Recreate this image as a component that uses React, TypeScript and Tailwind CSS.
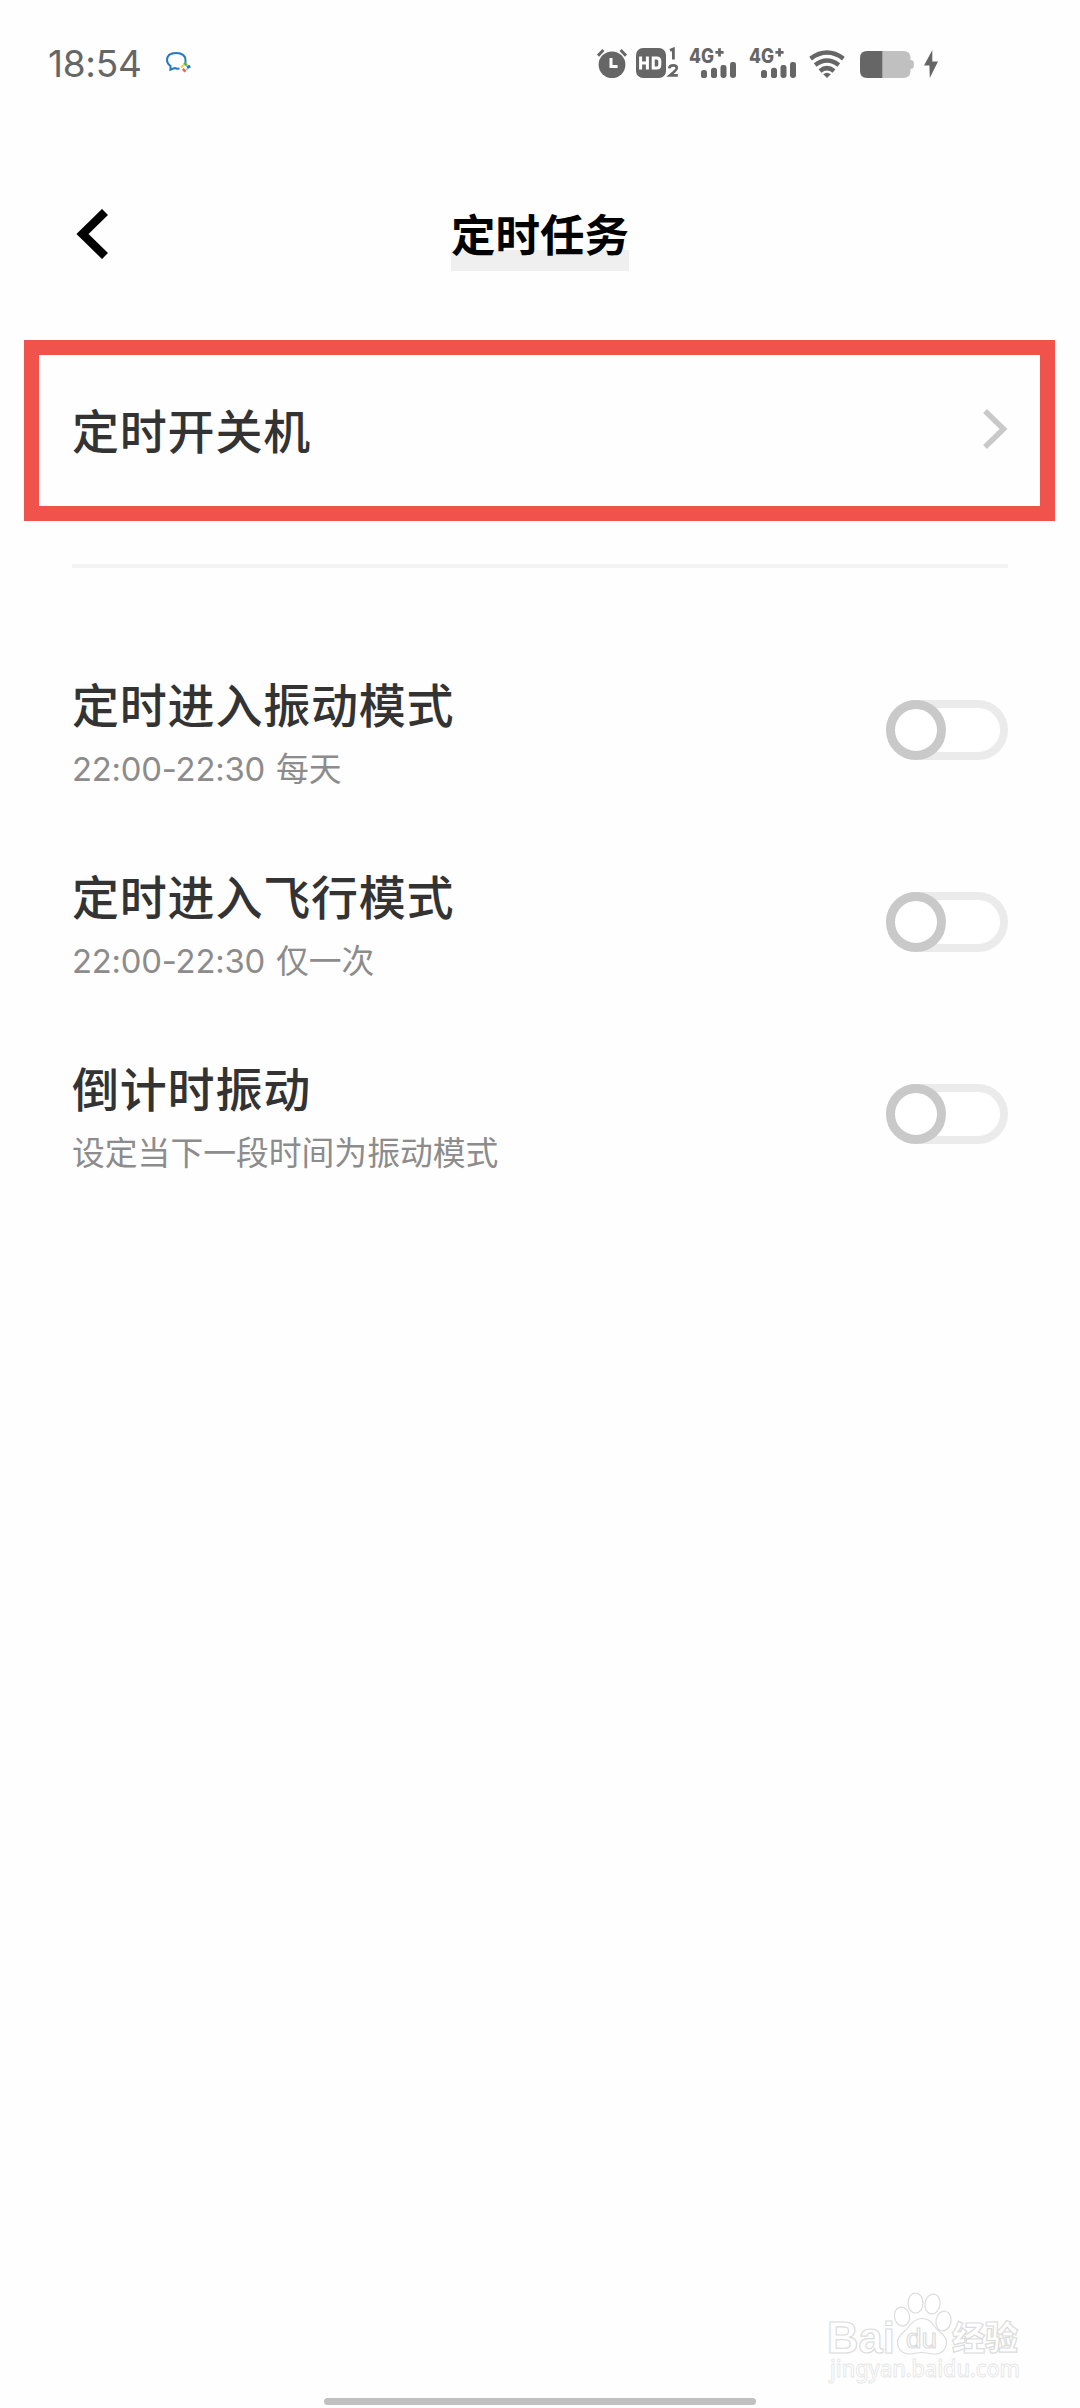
import React from "react";

const INK = "#666666";

function AlarmIcon() {
  return (
    <svg className="h-[30px] w-[30px]" viewBox="0 0 30 30">
      <circle cx="15" cy="16.8" r="13.4" fill={INK} />
      <path d="M1 7.6 6.4 2M29 7.6 23.6 2" stroke={INK} strokeWidth="3" fill="none" />
      <path d="M14 10v8.4h6.6" stroke="#fff" strokeWidth="3" fill="none" />
    </svg>
  );
}

function HdIcon() {
  return (
    <svg className="ml-2 h-[32px] w-[44px]" viewBox="0 0 44 32">
      <rect x="1" y="1" width="30" height="30" rx="7" fill={INK} />
      <path d="M5.6 9.6v13M12.4 9.6v13M5.6 16h7" stroke="#fff" strokeWidth="3" fill="none" />
      <path d="M18.2 11.1h3.6q3 0 3 3v4q0 3-3 3h-3.6z" stroke="#fff" strokeWidth="3" fill="none" />
      <path d="M35 3.4 38.4 2v10.5" stroke={INK} strokeWidth="2.8" fill="none" />
      <path d="M34.2 21.4q.4-3 4-3 3.6 0 3.6 2.6 0 1.6-2.4 3.4l-4.6 4h8" stroke={INK} strokeWidth="2.6" fill="none" />
    </svg>
  );
}

function SignalIcon() {
  return (
    <svg className="h-[32px] w-[48px] overflow-visible" viewBox="0 0 48 32">
      <text x="0" y="15.6" fontFamily="Inter" fontWeight="800" fontSize="19.5" textLength="25" lengthAdjust="spacingAndGlyphs" fill={INK}>4G</text>
      <path d="M26.4 5.4h8.2M30.5 1.3v8.2" stroke={INK} strokeWidth="2.8" />
      <rect x="12" y="23" width="6" height="8" rx="2.6" fill={INK} />
      <rect x="22" y="20.8" width="6" height="10.2" rx="2.6" fill={INK} />
      <rect x="31.5" y="18" width="6" height="13" rx="2.4" fill={INK} />
      <rect x="41" y="15" width="6" height="16" rx="2.4" fill={INK} />
    </svg>
  );
}

function WifiIcon() {
  return (
    <svg className="h-[30px] w-[38px]" viewBox="0 0 38 30">
      <g fill="none" stroke={INK} strokeWidth="4.4">
        <path d="M2.6 9.600q16.400-12 32.800 0" />
        <path d="M7.200 16q11.800-9 23.600 0" />
        <path d="M12 22q7-5.800 14 0" />
      </g>
      <path d="M15.200 25.200q3.800-3 7.600 0L19 29z" fill={INK} />
    </svg>
  );
}

function BatteryIcon() {
  return (
    <svg className="h-[27px] w-[54px]" viewBox="0 0 54 27">
      <path d="M22 0h21.5q7 0 7 7v2q3.300.200 3.300 2.400v4.200q0 2.200-3.300 2.400v2q0 7-7 7H22z" fill="#c0c0c0" />
      <path d="M22.300 0H7Q0 0 0 7v13q0 7 7 7h15.300z" fill={INK} />
    </svg>
  );
}

function ChatIcon() {
  return (
    <svg className="h-[24px] w-[28px]" viewBox="0 0 28 24">
      <path
        d="M14.500 17.600Q11.500 18 9.500 17L5.400 18.700 5.500 15Q2 12.200 2 9.200 2 2 11.200 2 20.500 2 20.500 9.500V12"
        fill="none"
        stroke="#2479c2"
        strokeWidth="2"
      />
      <path d="m16 16.500 4-3.700" stroke="#e5d64b" strokeWidth="2" />
      <path d="m19.300 11.500 2.400 3" stroke="#62ad3a" strokeWidth="2.400" />
      <path d="m22 16.500 3.200-1.300" stroke="#2479c2" strokeWidth="3" />
      <path d="m17.800 17.800 2.700 2.800" stroke="#e86a4b" strokeWidth="2.600" />
      <path d="m21.500 19 1-1" stroke="#8ccbe8" strokeWidth="2" />
    </svg>
  );
}

function StatusBar() {
  return (
    <header className="flex h-[128px] items-start pt-[47px]">
      <div className="flex h-[32px] w-full items-center">
        <span className="ml-[48px] w-[117px] pt-px font-['Inter'] text-[37px] leading-[32px] tracking-[-0.3px] text-[#666666]">18:54</span>
        <ChatIcon />
        <div className="ml-[404px] flex h-[32px] items-center">
          <AlarmIcon />
          <HdIcon />
          <div className="ml-[10px] flex gap-3">
            <SignalIcon />
            <SignalIcon />
          </div>
          <div className="ml-[11px] mt-[2px] flex">
            <WifiIcon />
          </div>
          <div className="ml-[14px] mt-[3px] flex">
            <BatteryIcon />
          </div>
          <svg className="ml-[10px] mt-[2px] h-[28px] w-[14px]" viewBox="0 0 14 28">
            <path d="M8.300 0 0 15.600h5.400L5.800 28 14 11.600H8.300z" fill={INK} />
          </svg>
        </div>
      </div>
    </header>
  );
}

function Toggle() {
  return (
    <button className="flex h-[60px] w-[122px] shrink-0 rounded-full border-8 border-[#ebebeb] bg-white" role="switch" aria-checked="false">
      <span className="-mt-2 -ml-2 block h-[60px] w-[60px] shrink-0 rounded-full border-[9px] border-[#c9c9c9] bg-white" />
    </button>
  );
}

const tasks = [
  { title: "定时进入振动模式", time: "22:00-22:30", note: "每天" },
  { title: "定时进入飞行模式", time: "22:00-22:30", note: "仅一次" },
  { title: "倒计时振动", time: "", note: "设定当下一段时间为振动模式" },
];

function Watermark() {
  return (
    <svg className="h-[110px] w-[240px]" viewBox="0 0 240 110">
      <g fill="#fff" stroke="#dcdcdc" strokeWidth="1.200">
        <text x="17" y="73" fontFamily="Liberation Sans" fontWeight="700" fontSize="45" textLength="68" lengthAdjust="spacingAndGlyphs">Bai</text>
        <ellipse cx="92" cy="36.500" rx="7.500" ry="9.500" transform="rotate(-12 92 36.500)" />
        <ellipse cx="105.500" cy="23" rx="7.500" ry="10" />
        <ellipse cx="122.500" cy="24" rx="7.500" ry="10" transform="rotate(10 122.500 24)" />
        <ellipse cx="133.500" cy="41" rx="7.500" ry="10" transform="rotate(12 133.500 41)" />
        <path d="M112 38.500c6 0 9 2.500 12.500 8s12 8 12 15.500-5 12-12 12c-5 0-8-1.500-13-1.500s-7 1.500-12 1.500c-7 0-12-5-12-12 0-7 7-9.500 11-15s7.500-8.500 13.500-8.500z" />
        <text x="96" y="68" fontFamily="Liberation Sans" fontSize="28" textLength="31">du</text>
        <text x="142" y="70" fontFamily="Noto Sans CJK SC" fontWeight="900" fontSize="33" textLength="66">经验</text>
      </g>
      <text x="20" y="97" fontFamily="Noto Sans" fontSize="23" fontWeight="500" textLength="190" lengthAdjust="spacingAndGlyphs" fill="#fff" stroke="#e6e6e6" strokeWidth="0.9">jingyan.baidu.com</text>
    </svg>
  );
}

export default function App() {
  return (
    <div className="flex h-[2408px] w-[1080px] flex-col overflow-hidden bg-[#fefefe] font-['Inter','Noto_Sans_CJK_SC',sans-serif]">
      <StatusBar />

      <div className="grid h-[212px] grid-cols-[1fr_auto_1fr] items-start">
        <svg className="mt-[81px] ml-[76px] h-[50px] w-[32px]" viewBox="0 0 32 50">
          <path d="M29 3 6.500 25l22.500 22" fill="none" stroke="#000" strokeWidth="8.500" />
        </svg>
        <h1 className="mt-[75px] h-[68px] bg-linear-to-b from-transparent from-[69%] to-[#efefef] to-[69%] text-[44.5px] leading-[66px] font-bold text-black">
          定时任务
        </h1>
      </div>

      <div className="mr-[25px] ml-[24px] flex h-[181px] items-center justify-between border-[15px] border-[#f0524c] pr-[32px] pl-[33px] text-[47px] tracking-[0.8px] text-[#333333]">
        <span className="pt-[3px] leading-[60px] font-medium">定时开关机</span>
        <svg className="-mt-[3px] h-[40px] w-[25px]" viewBox="0 0 25 40">
          <path d="M2 2 20.500 20 2 38" fill="none" stroke="#c9c9c9" strokeWidth="5.500" />
        </svg>
      </div>

      <div className="mx-[72px] mt-[43px] h-1 bg-[#f3f3f3]" />

      <main className="mt-[66px] flex flex-col px-[72px]">
        {tasks.map((task) => (
          <section key={task.title} className="flex h-[192px] items-center justify-between">
            <div className="flex flex-col gap-[9px] pt-[8px]">
              <h2 className="text-[47px] leading-[60px] font-medium tracking-[0.8px] text-[#333333]">{task.title}</h2>
              <p className="flex h-[48px] gap-[11px] text-[32.8px] leading-[48px] text-[#8c8c8c]">
                {task.time && <span className="tracking-[-0.2px]">{task.time}</span>}
                <span>{task.note}</span>
              </p>
            </div>
            <Toggle />
          </section>
        ))}
      </main>

      <footer className="mt-auto flex flex-col">
        <div className="mr-[30px] self-end">
          <Watermark />
        </div>
        <div className="mt-[8px] mb-[3px] h-[7px] w-[432px] self-center rounded-full bg-[#c0c0c0]" />
      </footer>
    </div>
  );
}
